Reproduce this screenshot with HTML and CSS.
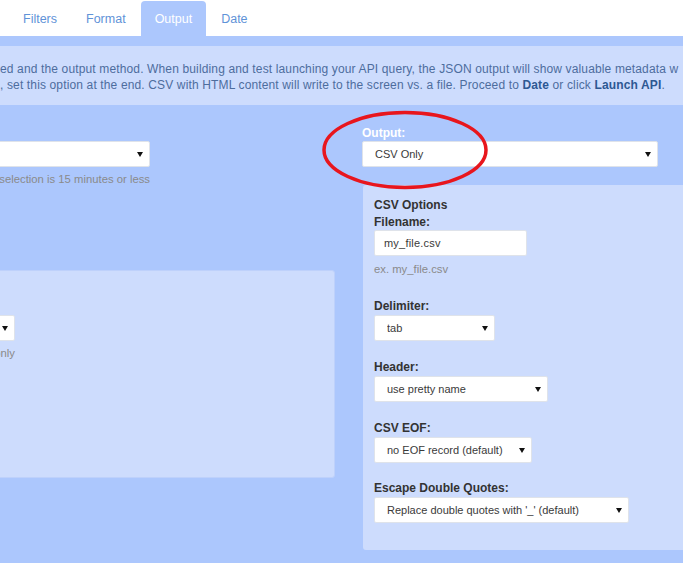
FILE: index.html
```html
<!DOCTYPE html>
<html lang="en">
<head>
  <meta charset="UTF-8">
  <meta name="viewport" content="width=device-width, initial-scale=1">
  <title>Output</title>
  <link rel="stylesheet" href="styles.css">
</head>
<body>

  <ul class="tabs">
    <li class="tab">Filters</li>
    <li class="tab">Format</li>
    <li class="tab active">Output</li>
    <li class="tab">Date</li>
  </ul>

  <div class="main">
    <div class="info">
      <div class="line">ed and the output method. When building and test launching your API query, the JSON output will show valuable metadata w</div>
      <div class="line">, set this option at the end. CSV with HTML content will write to the screen vs. a file. Proceed to <b>Date</b> or click <b>Launch API</b>.</div>
    </div>

    <div class="row">
      <div class="col-left">
        <div class="select-wrap w-wide top-field">
          <select class="select"><option></option></select>
        </div>
        <div class="help w-wide right">selection is 15 minutes or less</div>

        <div class="panel panel-left">
          <div class="select-wrap w-left">
            <select class="select"><option></option></select>
          </div>
          <div class="help w-left right">only</div>
        </div>
      </div>

      <div class="col-right">
        <label class="label label-white">Output:</label>
        <div class="select-wrap w-output">
          <select class="select"><option>CSV Only</option></select>
        </div>

        <div class="panel panel-right">
          <div class="heading">CSV Options</div>
          <label class="label">Filename:</label>
          <input class="input" type="text" value="my_file.csv">
          <div class="help">ex. my_file.csv</div>

          <div class="group first">
            <label class="label">Delimiter:</label>
            <div class="select-wrap w-delim">
              <select class="select"><option>tab</option></select>
            </div>
          </div>

          <div class="group">
            <label class="label">Header:</label>
            <div class="select-wrap w-header">
              <select class="select"><option>use pretty name</option></select>
            </div>
          </div>

          <div class="group">
            <label class="label">CSV EOF:</label>
            <div class="select-wrap w-eof">
              <select class="select"><option>no EOF record (default)</option></select>
            </div>
          </div>

          <div class="group last">
            <label class="label">Escape Double Quotes:</label>
            <div class="select-wrap w-escape">
              <select class="select"><option>Replace double quotes with '_' (default)</option></select>
            </div>
          </div>
        </div>
      </div>
    </div>
  </div>

  <svg class="mark" width="170" height="82" viewBox="0 0 170 82">
    <ellipse cx="84" cy="40" rx="81" ry="37.5" fill="none" stroke="#e8161d" stroke-width="3.5"/>
  </svg>

</body>
</html>
```

FILE: styles.css
```css
body {
  margin: 0;
  font-family: "Liberation Sans", Arial, sans-serif;
  background: #fff;
  color: #333;
  overflow: hidden;
  position: relative;
}
.tabs {
  display: flex;
  align-items: flex-end;
  margin: 0;
  padding: 0 0 0 9px;
  height: 36px;
  list-style: none;
}
.tab {
  height: 35px;
  line-height: 34px;
  padding: 1px 14px 0;
  box-sizing: border-box;
  margin-right: 1px;
  font-size: 12.5px;
  color: #5f93d8;
  border-radius: 4px 4px 0 0;
}
.tab.active {
  background: #acc7fd;
  color: #fff;
}
.main {
  background: #acc7fd;
  padding-top: 10px;
  height: 517px;
}
.info {
  background: #cddcfd;
  padding: 15px 0 12px;
  font-size: 12px;
  line-height: 16px;
  letter-spacing: 0.14px;
  color: #4d6d9d;
  white-space: nowrap;
}
.info b {
  color: #2d5893;
}
.row {
  display: flex;
  gap: 27px;
  margin-top: 21px;
}
.col-left {
  width: 535px;
  margin-left: -200px;
  flex: none;
}
.col-right {
  width: 341px;
  flex: none;
}
.top-field {
  margin-top: 15px;
}
.label {
  display: block;
  font-size: 12px;
  line-height: 14px;
  font-weight: bold;
  color: #333;
  margin-bottom: 1px;
}
.label-white {
  color: #fff;
}
.select-wrap {
  position: relative;
}
.select-wrap::after {
  content: "";
  position: absolute;
  right: 7px;
  top: 11px;
  border-left: 3px solid transparent;
  border-right: 3px solid transparent;
  border-top: 5px solid #111;
  pointer-events: none;
}
.select {
  -webkit-appearance: none;
  appearance: none;
  display: block;
  width: 100%;
  height: 26px;
  padding: 0 12px;
  background: #fff;
  border: 1px solid #dfe3ea;
  border-radius: 2px;
  font-family: inherit;
  font-size: 11px;
  color: #3a3a3a;
  box-sizing: border-box;
}
.input {
  display: block;
  width: 153px;
  height: 26px;
  padding: 0 9px;
  margin-top: 1px;
  border: 1px solid #dfe3ea;
  border-radius: 2px;
  font-family: inherit;
  font-size: 11px;
  letter-spacing: 0.2px;
  color: #3a3a3a;
  box-sizing: border-box;
}
.help {
  margin-top: 5px;
  font-size: 11.3px;
  line-height: 14px;
  color: #8a8a8a;
  white-space: nowrap;
}
.right {
  text-align: right;
}
.w-wide { width: 350px; }
.w-left { width: 203px; }
.w-output { width: 296px; }
.w-delim { width: 121px; }
.w-header { width: 174px; }
.w-eof { width: 158px; }
.w-escape { width: 255px; }

.panel {
  background: #cddcfd;
  border-radius: 3px;
  box-sizing: border-box;
}
.panel-left {
  margin-top: 84px;
  height: 208px;
  padding: 44px 11px 13px;
  border: 1px solid #bed1fb;
}
.panel-right {
  margin-top: 18px;
  margin-left: 1px;
  padding: 13px 11px 27px;
}
.heading {
  font-size: 12px;
  line-height: 14px;
  font-weight: bold;
  color: #333;
  margin-bottom: 3px;
}
.panel-right .help {
  margin-top: 6px;
}
.group {
  margin-top: 19px;
}
.group.first {
  margin-top: 23px;
}
.group.last {
  margin-top: 18px;
}
.group .label {
  margin-bottom: 2px;
}
.mark {
  position: absolute;
  left: 321px;
  top: 110px;
}
```
